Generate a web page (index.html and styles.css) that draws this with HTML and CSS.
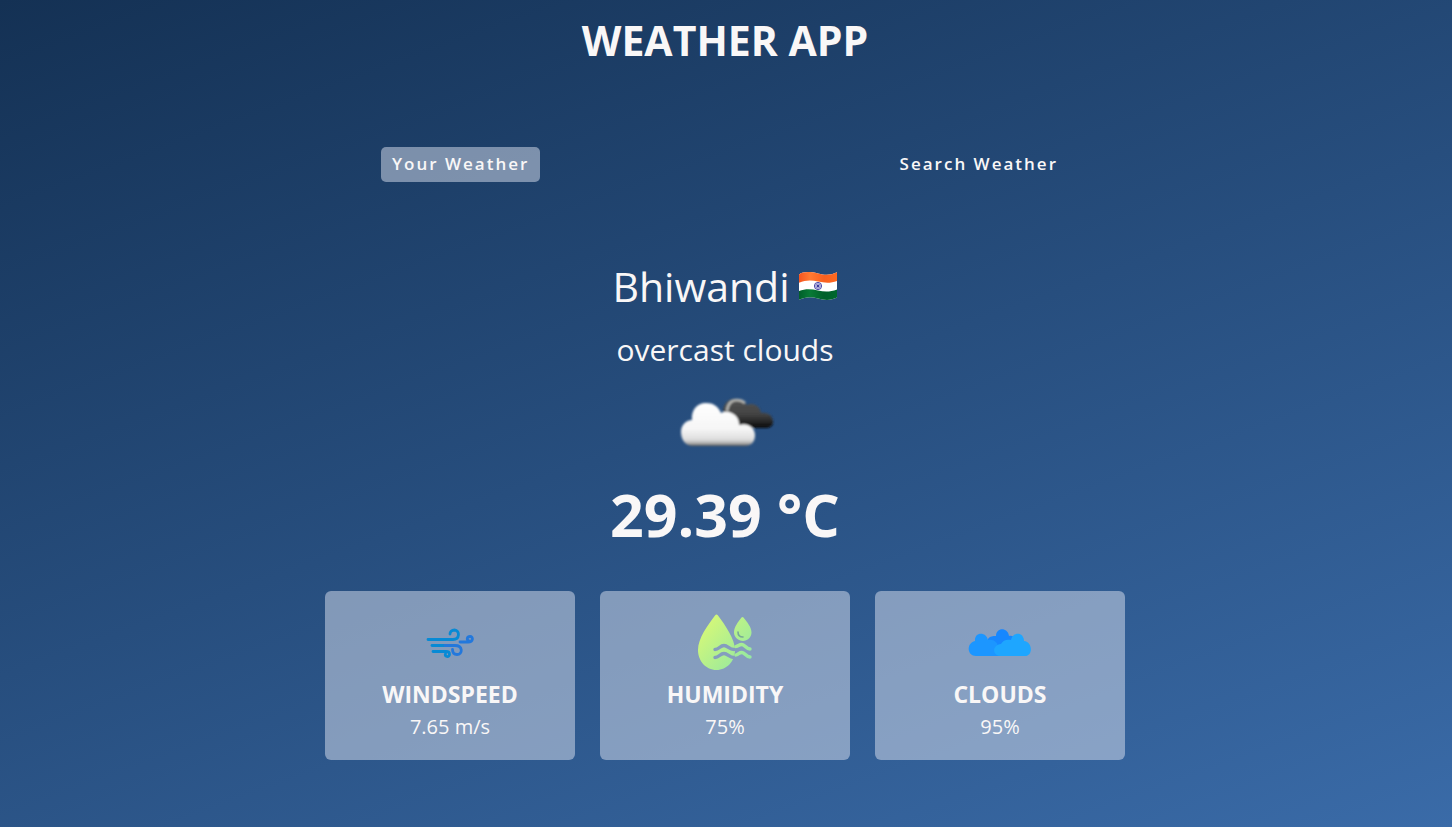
FILE: index.html
```html
<!DOCTYPE html>
<html lang="en">
<head>
  <meta charset="utf-8">
  <meta name="viewport" content="width=device-width, initial-scale=1">
  <title>Weather App</title>
  <link rel="stylesheet" href="styles.css">
</head>
<body>
  <div class="wrapper">
    <h1 class="title">WEATHER APP</h1>

    <nav class="tabs">
      <button type="button" class="tab tab-current">Your Weather</button>
      <button type="button" class="tab">Search Weather</button>
    </nav>

    <main class="weather">
      <div class="place">
        <p class="city">Bhiwandi</p>
        <svg class="flag" viewBox="0 0 40 30" role="img" aria-label="India">
          <defs>
            <clipPath id="wave"><path d="M1 3.500C5 .5 12 .5 20 2.500S33 4 39 1.200V26.500C33 29.500 27 29.500 20 27.500S7 26 1 28.800Z"/></clipPath>
            <linearGradient id="saffron"><stop offset="0" stop-color="#f4511e"/><stop offset=".3" stop-color="#ff7a32"/><stop offset=".65" stop-color="#f9601f"/><stop offset="1" stop-color="#ff6a20"/></linearGradient>
            <linearGradient id="green"><stop offset="0" stop-color="#005c2a"/><stop offset=".3" stop-color="#087a35"/><stop offset=".65" stop-color="#00602a"/><stop offset="1" stop-color="#00682f"/></linearGradient>
          </defs>
          <g clip-path="url(#wave)">
            <path fill="#fff" d="M0 0H40V30H0Z"/>
            <path fill="url(#saffron)" d="M0 0H40V9.500C33 12.500 27 12 20 10.500S7 9 0 12.300Z"/>
            <path fill="url(#green)" d="M0 20.500C7 17.500 13 18 20 19.500S33 21 40 18V30H0Z"/>
          </g>
          <circle cx="20" cy="15" r="3.600" fill="#d9d9f0" stroke="#4a48a8" stroke-width="1"/>
          <path d="M20 11.500V18.500M16.500 15H23.500M17.500 12.500L22.500 17.500M22.500 12.500L17.500 17.500" stroke="#5d5bb4" stroke-width=".6"/>
          <circle cx="20" cy="15" r="1.200" fill="#3a389c"/>
        </svg>
      </div>

      <p class="description">overcast clouds</p>

      <svg class="sky-icon" viewBox="-2 0 100 56" aria-hidden="true">
        <defs>
          <linearGradient id="dark" x1="0" y1="0" x2="0" y2="1"><stop offset="0" stop-color="#555"/><stop offset=".55" stop-color="#424242"/><stop offset="1" stop-color="#080808"/></linearGradient>
          <linearGradient id="light" x1="0" y1="0" x2="0" y2="1"><stop offset="0" stop-color="#fff"/><stop offset=".6" stop-color="#f6f6f6"/><stop offset=".85" stop-color="#ddd"/><stop offset=".94" stop-color="#aaa"/><stop offset="1" stop-color="#555"/></linearGradient>
          <filter id="soft"><feGaussianBlur stdDeviation=".8"/></filter>
        </defs>
        <g filter="url(#soft)">
          <path fill="url(#dark)" d="M46 19C47 10 53 6 60 7C64 7 68 10 70 13C76 10 83 14 84 21C91 20 96 24 96 30C96 34 93 36 88 36H64Z"/>
          <path fill="none" stroke="#b4b4b0" stroke-width="2.600" d="M50 19C51 11 55 8 60 8C63 8 66 9 68 11"/>
          <path fill="url(#light)" d="M16 54C8 54 4 47 4 40C4 33 9 28 15 28C14 18 20 11 29 11C36 11 41 14 44 21C52 17 63 24 62 33C71 30 78 36 78 43C78 50 74 54 68 54Z"/>
        </g>
      </svg>

      <p class="temperature">29.39 °C</p>

      <div class="cards">
        <section class="card">
          <svg class="card-icon" viewBox="0 0 80 80" fill="none" stroke-width="2.800" stroke-linecap="round" aria-hidden="true">
            <g stroke="#078ad5">
              <path d="M18 37.500H43C50 37.500 50 28.500 44.500 28C41.500 28 40 30 40 32"/>
              <path d="M23 49.500H36C41 49.500 40 55 37 54.500Q34.500 54 35.500 52"/>
              <path d="M22 43.500H35"/>
            </g>
            <g stroke="#2378dc">
              <path d="M35 43.500H45C53 43.500 53 52.500 47 52.500C44 52.500 42.500 50.500 42.500 47.500"/>
              <path d="M50 40H58C63.500 40 63.500 34.500 60 34.500C57 34.500 56.500 37.500 58.500 38.500"/>
            </g>
          </svg>
          <h2 class="card-title">WINDSPEED</h2>
          <p class="card-value">7.65 m/s</p>
        </section>

        <section class="card">
          <svg class="card-icon" viewBox="-1 0 80 80" aria-hidden="true">
            <defs>
              <linearGradient id="lime" gradientUnits="userSpaceOnUse" x1="15" y1="25" x2="60" y2="65"><stop offset="0" stop-color="#d5f878"/><stop offset="1" stop-color="#92e8a2"/></linearGradient>
              <mask id="cut" maskUnits="userSpaceOnUse" x="0" y="0" width="80" height="80">
                <path fill="#fff" d="M0 0H80V80H0Z"/>
                <path fill="none" stroke="#000" stroke-width="3.400" stroke-linecap="round" d="M29 47.500C33 47.500 34 43.500 38 43.500S43 47.500 48 47.500M29 55.500C33 55.500 34 51.500 38 51.500S43 55.500 48 55.500"/>
              </mask>
            </defs>
            <path mask="url(#cut)" fill="url(#lime)" d="M29 13.500Q30.500 11.500 32 13.500C39 23 49 37 49 48C49 59 41 68 30.500 68S12 59 12 48C12 36 22 23 29 13.500Z"/>
            <path fill="none" stroke="url(#lime)" stroke-width="3.400" stroke-linecap="round" d="M50 44.500C53 43.500 53 42.500 56 42.500S60 47 64 47M50 53C53 52 53 50.500 56 50.500S60 55 64 55"/>
            <path fill="url(#lime)" d="M55.500 15.500Q56.500 14.500 57.500 15.500C61 20 65.500 25 65.500 30.500C65.500 35 61.500 39 57 39S48 35 48 30.500C48 25 52 20 55.500 15.500Z"/>
            <path d="M52 30C52 33 54 35 57 35" fill="none" stroke="#78a997" stroke-width="1.600" stroke-linecap="round"/>
          </svg>
          <h2 class="card-title">HUMIDITY</h2>
          <p class="card-value">75%</p>
        </section>

        <section class="card">
          <svg class="card-icon" viewBox="0 -1 80 80" aria-hidden="true">
            <path fill="#1787ff" d="M28 53V36C30 33 33 33 36 33C36 24 48 24 49 33C52 32 54 34 56 36V48Z"/>
            <path fill="#1c96ff" d="M16 53C7 53 6 40 15 38C14 29 26 28 28 37C34 36 38 40 38 44L47 53Z"/>
            <path fill="#1ea6ff" d="M40 53C32 52 32 42 41 41C43 37 47 36 51 37C53 28 64 29 64 38C73 39 73 53 65 53Z"/>
          </svg>
          <h2 class="card-title">CLOUDS</h2>
          <p class="card-value">95%</p>
        </section>
      </div>
    </main>
  </div>
</body>
</html>
```
FILE: styles.css
```css
* {
  box-sizing: border-box;
  margin: 0;
  padding: 0;
}

body {
  font-family: "Open Sans", "Noto Sans", sans-serif;
  color: #f9f7f7;
}

.wrapper {
  min-height: 100vh;
  padding: 15px 18px 24px 16px;
  background-image: linear-gradient(160deg, #143154 0%, #3a6ba8 100%);
}

.title {
  font-size: 41px;
  line-height: 50px;
  font-weight: 700;
  text-align: center;
}

.tabs {
  display: flex;
  justify-content: space-between;
  width: 100%;
  max-width: 688px;
  margin: 82px auto 0;
}

.tab {
  padding: 4px 11px 6px;
  border: 0;
  border-radius: 5px;
  background: transparent;
  color: inherit;
  font: inherit;
  font-size: 17px;
  line-height: 25px;
  font-weight: 600;
  letter-spacing: 2px;
  cursor: pointer;
}

.tab-current {
  background: rgba(219, 226, 239, 0.5);
}

.weather {
  display: flex;
  flex-direction: column;
  align-items: center;
  padding-top: 74px;
}

.place {
  display: flex;
  align-items: center;
  gap: 8px;
}

.city {
  font-size: 41px;
  line-height: 60px;
  font-weight: 400;
}

.flag {
  width: 40px;
  height: 30px;
}

.description {
  margin-top: 14px;
  font-size: 30px;
  line-height: 40px;
  font-weight: 400;
}

.sky-icon {
  width: 100px;
  height: 56px;
  margin-top: 22px;
}

.temperature {
  margin-top: 31px;
  font-size: 59px;
  line-height: 70px;
  font-weight: 700;
}

.cards {
  display: flex;
  justify-content: center;
  gap: 25px;
  width: 100%;
  max-width: 800px;
  margin-top: 42px;
}

.card {
  flex: 1;
  display: flex;
  flex-direction: column;
  align-items: center;
  padding: 11px 16px 17px;
  border-radius: 6px;
  background: rgba(219, 226, 239, 0.5);
}

.card-icon {
  width: 80px;
  height: 80px;
}

.card-title {
  font-size: 23px;
  line-height: 25px;
  font-weight: 700;
}

.card-value {
  margin-top: 4px;
  font-size: 20px;
  line-height: 32px;
  font-weight: 400;
}
```
